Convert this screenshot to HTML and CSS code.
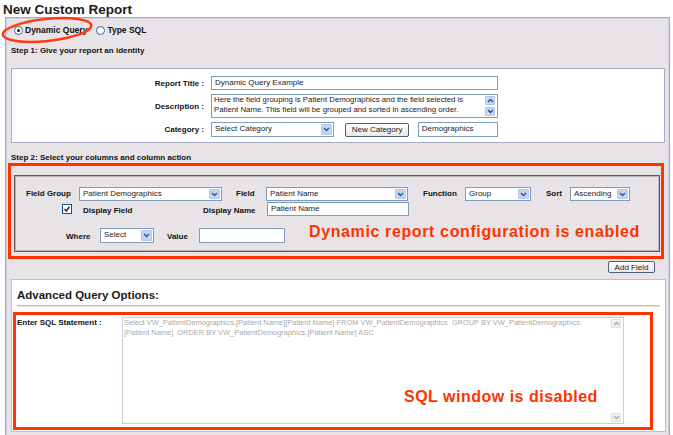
FILE: index.html
```html
<!DOCTYPE html>
<html>
<head>
<meta charset="utf-8">
<title>New Custom Report</title>
<link rel="stylesheet" href="styles.css">
</head>
<body>
<div class="page">
  <h1 class="title">New Custom Report</h1>
  <svg class="mode-ring" width="100" height="40" viewBox="0 0 100 40"><ellipse cx="47" cy="20" rx="44.5" ry="11" transform="rotate(-6 47 20)" fill="none" stroke="#ff3a12" stroke-width="2.5"/></svg>
  <div class="panel">
    <div class="mode-row">
      <label class="radio-opt"><span class="radio on"></span>Dynamic Query</label>
      <label class="radio-opt second"><span class="radio"></span>Type SQL</label>
    </div>
    <div class="step-label step1">Step 1: Give your report an identity</div>
    <div class="box identity">
      <div class="lbl">Report Title :</div>
      <div class="inp w-title">Dynamic Query Example</div>
      <div class="lbl">Description :</div>
      <div class="ta desc">
        <div class="ta-text">Here the field grouping is Patient Demographics and the field selected is<br>Patient Name. This field will be grouped and sorted in ascending order.</div>
        <div class="vscroll">
          <span class="sb-btn"><svg width="7" height="5" viewBox="0 0 7 5"><polyline points="1,4 3.5,1.5 6,4" fill="none" stroke="#2e4a80" stroke-width="1.4"/></svg></span>
          <span class="sb-btn"><svg width="7" height="5" viewBox="0 0 7 5"><polyline points="1,1 3.5,3.5 6,1" fill="none" stroke="#2e4a80" stroke-width="1.4"/></svg></span>
        </div>
      </div>
      <div class="lbl">Category :</div>
      <div class="cat-row">
        <div class="sel w-cat"><span class="val">Select Category</span><span class="arr"><svg width="7" height="5" viewBox="0 0 7 5"><polyline points="1,1 3.5,3.5 6,1" fill="none" stroke="#3d5585" stroke-width="1.5"/></svg></span></div>
        <button class="btn newcat">New Category</button>
        <div class="inp w-catinp">Demographics</div>
      </div>
    </div>

    <div class="step-label step2">Step 2: Select your columns and column action</div>
    <div class="frame step2-frame">
      <div class="fields">
        <div class="frow r1">
          <span class="flbl l-fg">Field Group</span>
          <div class="sel s-fg"><span class="val">Patient Demographics</span><span class="arr"><svg width="7" height="5" viewBox="0 0 7 5"><polyline points="1,1 3.5,3.5 6,1" fill="none" stroke="#3d5585" stroke-width="1.5"/></svg></span></div>
          <span class="flbl l-field">Field</span>
          <div class="sel s-field"><span class="val">Patient Name</span><span class="arr"><svg width="7" height="5" viewBox="0 0 7 5"><polyline points="1,1 3.5,3.5 6,1" fill="none" stroke="#3d5585" stroke-width="1.5"/></svg></span></div>
          <span class="flbl l-func">Function</span>
          <div class="sel s-func"><span class="val">Group</span><span class="arr"><svg width="7" height="5" viewBox="0 0 7 5"><polyline points="1,1 3.5,3.5 6,1" fill="none" stroke="#3d5585" stroke-width="1.5"/></svg></span></div>
          <span class="flbl l-sort">Sort</span>
          <div class="sel s-sort"><span class="val">Ascending</span><span class="arr"><svg width="7" height="5" viewBox="0 0 7 5"><polyline points="1,1 3.5,3.5 6,1" fill="none" stroke="#3d5585" stroke-width="1.5"/></svg></span></div>
        </div>
        <div class="frow r2">
          <span class="chk"><svg width="8" height="8" viewBox="0 0 8 8"><polyline points="1.5,4 3.3,6 6.5,1.8" fill="none" stroke="#1e2f66" stroke-width="1.5"/></svg></span>
          <span class="flbl l-disp">Display Field</span>
          <span class="flbl l-dname">Display Name</span>
          <div class="inp w-dname">Patient Name</div>
        </div>
        <div class="frow r3">
          <span class="flbl l-where">Where</span>
          <div class="sel s-where"><span class="val">Select</span><span class="arr"><svg width="7" height="5" viewBox="0 0 7 5"><polyline points="1,1 3.5,3.5 6,1" fill="none" stroke="#3d5585" stroke-width="1.5"/></svg></span></div>
          <span class="flbl l-value">Value</span>
          <div class="inp w-value"></div>
          <span class="note note-dyn">Dynamic report configuration is enabled</span>
        </div>
      </div>
    </div>

    <div class="add-row"><button class="btn addfield">Add Field</button></div>

    <div class="box advanced">
      <div class="adv-head">Advanced Query Options:</div>
      <div class="adv-sep"></div>
      <div class="frame sql-frame">
        <div class="sql-lbl">Enter SQL Statement :</div>
        <div class="ta sql-ta">
          <div class="ta-text sql-text">Select VW_PatientDemographics.[Patient Name][Patient Name] FROM VW_PatientDemographics  GROUP BY VW_PatientDemographics.
[Patient Name]  ORDER BY VW_PatientDemographics.[Patient Name] ASC</div>
          <div class="vscroll dis">
            <span class="sb-btn"><svg width="7" height="5" viewBox="0 0 7 5"><polyline points="1,4 3.5,1.5 6,4" fill="none" stroke="#a8a8a8" stroke-width="1.3"/></svg></span>
            <span class="sb-btn"><svg width="7" height="5" viewBox="0 0 7 5"><polyline points="1,1 3.5,3.5 6,1" fill="none" stroke="#a8a8a8" stroke-width="1.3"/></svg></span>
          </div>
          <span class="note note-sql">SQL window is disabled</span>
        </div>
      </div>
    </div>
  </div>
</div>
</body>
</html>
```
FILE: styles.css
```css
html, body {
  margin: 0;
  padding: 0;
  background: #ffffff;
}
body {
  font-family: "Liberation Sans", Arial, sans-serif;
  color: #111;
}
.page {
  position: relative;
  width: 673px;
  height: 435px;
  overflow: hidden;
}
.title {
  margin: 0;
  padding: 2px 0 0 3px;
  font-size: 13.5px;
  line-height: 15px;
  font-weight: bold;
  color: #1b1b1b;
}
.mode-ring {
  position: absolute;
  left: 0;
  top: 10px;
  z-index: 2;
}
.panel {
  margin-left: 5px;
  width: 665px;
  height: 418px;
  box-sizing: border-box;
  border: 1px solid #a2a6ca;
  border-bottom: none;
  background: #e7e3e7;
  box-shadow: inset 1px 1px 0 #d2d2e2, inset -1px 0 0 #d2d2e2;
}
.mode-row {
  display: flex;
  align-items: center;
  height: 24px;
  padding-left: 8px;
  font-size: 8.5px;
  font-weight: bold;
}
.radio-opt {
  display: flex;
  align-items: center;
  gap: 2px;
}
.radio-opt.second {
  margin-left: 9px;
}
.radio {
  width: 9px;
  height: 9px;
  box-sizing: border-box;
  border-radius: 50%;
  border: 1px solid #45608e;
  background: #fff;
  display: flex;
  align-items: center;
  justify-content: center;
}
.radio.on::after {
  content: "";
  width: 3px;
  height: 3px;
  border-radius: 50%;
  background: #111;
}
.step-label {
  font-size: 8px;
  font-weight: bold;
  line-height: 10px;
  padding-left: 5px;
  white-space: nowrap;
}
.step1 {
  padding-top: 4px;
}
.step2 {
  margin-top: 10px;
}
.box {
  background: #fff;
  border: 1px solid #a5acc8;
  box-sizing: border-box;
}
.identity {
  margin: 12px 0 0 5px;
  width: 654px;
  height: 75px;
  padding-top: 7px;
  display: grid;
  grid-template-columns: 192px 287px;
  grid-template-rows: 14px 24px 15px;
  column-gap: 7px;
  row-gap: 4px;
}
.lbl {
  font-size: 8px;
  font-weight: bold;
  text-align: right;
  align-self: center;
  white-space: nowrap;
}
.inp {
  border: 1px solid #7f9db9;
  background: #fff;
  font-size: 8px;
  line-height: 12px;
  padding-left: 3px;
  box-sizing: border-box;
  white-space: nowrap;
  overflow: hidden;
  color: #1a1a1a;
}
.w-title { width: 287px; height: 14px; }
.ta {
  display: flex;
  border: 1px solid #7f9db9;
  background: #fff;
  box-sizing: border-box;
}
.ta-text {
  flex: 1;
  font-size: 7.8px;
  line-height: 10px;
  padding-left: 2px;
  white-space: nowrap;
  overflow: hidden;
  color: #1a1a1a;
}
.desc {
  width: 287px;
  height: 24px;
}
.vscroll {
  width: 11px;
  display: flex;
  flex-direction: column;
  justify-content: space-between;
  padding: 1px 1px 1px 0;
}
.sb-btn {
  width: 10px;
  height: 9px;
  box-sizing: border-box;
  background: #c8d8f8;
  border: 1px solid #b2c4ea;
  border-radius: 1px;
  display: flex;
  align-items: center;
  justify-content: center;
}
.cat-row {
  display: flex;
  align-items: center;
}
.sel {
  display: flex;
  align-items: stretch;
  border: 1px solid #7f9db9;
  background: #fff;
  box-sizing: border-box;
  height: 14px;
  font-size: 8px;
  color: #1a1a1a;
}
.sel .val {
  flex: 1;
  padding-left: 3px;
  line-height: 12px;
  white-space: nowrap;
  overflow: hidden;
}
.sel .arr {
  width: 11px;
  margin: 1px;
  background: #c4d4f6;
  border: 1px solid #b6c8ee;
  box-sizing: border-box;
  border-radius: 1px;
  display: flex;
  align-items: center;
  justify-content: center;
}
.w-cat { width: 144px; height: 15px; }
.btn {
  font-family: "Liberation Sans", Arial, sans-serif;
  font-size: 8px;
  color: #1a1a1a;
  border: 1px solid #4f5d7c;
  border-radius: 2px;
  background: linear-gradient(#ffffff, #ebe9e2);
  padding: 0;
  box-sizing: border-box;
  line-height: 10px;
}
.newcat {
  margin-left: 11px;
  width: 74px;
  height: 14px;
}
.w-catinp {
  margin-left: 9px;
  width: 93px;
  height: 15px;
}
.frame {
  border: 3px solid #ff3300;
  box-sizing: border-box;
}
.step2-frame {
  margin-left: 2px;
  width: 656px;
  height: 96px;
  padding: 9px 1px 0 3px;
}
.fields {
  height: 77px;
  box-sizing: border-box;
  border: 1px solid #5a5a5a;
  box-shadow: inset 0 0 0 1px #b4b4b4;
  padding: 11px 1px 0 1px;
}
.frow {
  display: flex;
  align-items: center;
  height: 14px;
}
.r2 { margin-top: 1px; }
.r3 { margin-top: 12px; }
.flbl {
  font-size: 8px;
  font-weight: bold;
  white-space: nowrap;
  line-height: 10px;
}
.l-fg { margin-left: 10px; width: 45px; }
.s-fg { margin-left: 8px; width: 143px; }
.l-field { margin-left: 14px; width: 20px; }
.s-field { margin-left: 10px; width: 142px; }
.l-func { margin-left: 15px; width: 35px; }
.s-func { margin-left: 7px; width: 66px; }
.l-sort { margin-left: 15px; width: 16px; }
.s-sort { margin-left: 8px; width: 60px; }
.chk {
  margin-left: 46px;
  width: 10px;
  height: 10px;
  box-sizing: border-box;
  border: 1px solid #1c5180;
  background: #fff;
  display: flex;
  align-items: center;
  justify-content: center;
}
.l-disp { margin-left: 11px; width: 51px; margin-top: 4px; }
.l-dname { margin-left: 69px; width: 55px; margin-top: 4px; }
.w-dname { margin-left: 9px; width: 142px; height: 14px; }
.l-where { margin-left: 50px; width: 32px; margin-top: 3px; }
.s-where { margin-left: 2px; width: 54px; height: 15px; }
.l-value { margin-left: 13px; width: 24px; margin-top: 3px; }
.w-value { margin-left: 8px; width: 86px; height: 15px; }
.note {
  color: #ff3300;
  font-size: 16px;
  font-weight: bold;
  line-height: 16px;
  white-space: nowrap;
}
.note-dyn {
  margin-left: 24px;
  align-self: flex-start;
  margin-top: -4px;
  letter-spacing: 0.62px;
}
.add-row {
  display: flex;
  justify-content: flex-end;
  padding-right: 14px;
  margin-top: 2px;
}
.addfield {
  width: 47px;
  height: 12px;
  line-height: 9px;
}
.advanced {
  margin: 6px 0 0 5px;
  width: 655px;
  height: 153px;
  padding-top: 8px;
  border-color: #b9c0da;
}
.adv-head {
  font-size: 11.5px;
  font-weight: bold;
  line-height: 14px;
  padding-left: 5px;
  color: #1a1a1a;
}
.adv-sep {
  margin: 3px 5px 0 5px;
  height: 1px;
  background: #c9c1b3;
  border-bottom: 1px solid #e4dfd6;
}
.sql-frame {
  margin: 5px 0 0 1px;
  width: 640px;
  height: 118px;
  display: flex;
  padding: 2px 0 0 1px;
}
.sql-lbl {
  width: 105px;
  font-size: 8px;
  font-weight: bold;
  line-height: 10px;
  padding-top: 1px;
  white-space: nowrap;
}
.sql-ta {
  position: relative;
  width: 502px;
  height: 107px;
  border-color: #c3d0e3;
}
.sql-text {
  white-space: pre;
  font-size: 7.45px;
  color: #a9a9a9;
  padding-left: 1px;
}
.vscroll.dis .sb-btn {
  background: #f1f1f1;
  border-color: #e0e0e0;
}
.note-sql {
  position: absolute;
  left: 281px;
  top: 71px;
  letter-spacing: 0.5px;
}
```
